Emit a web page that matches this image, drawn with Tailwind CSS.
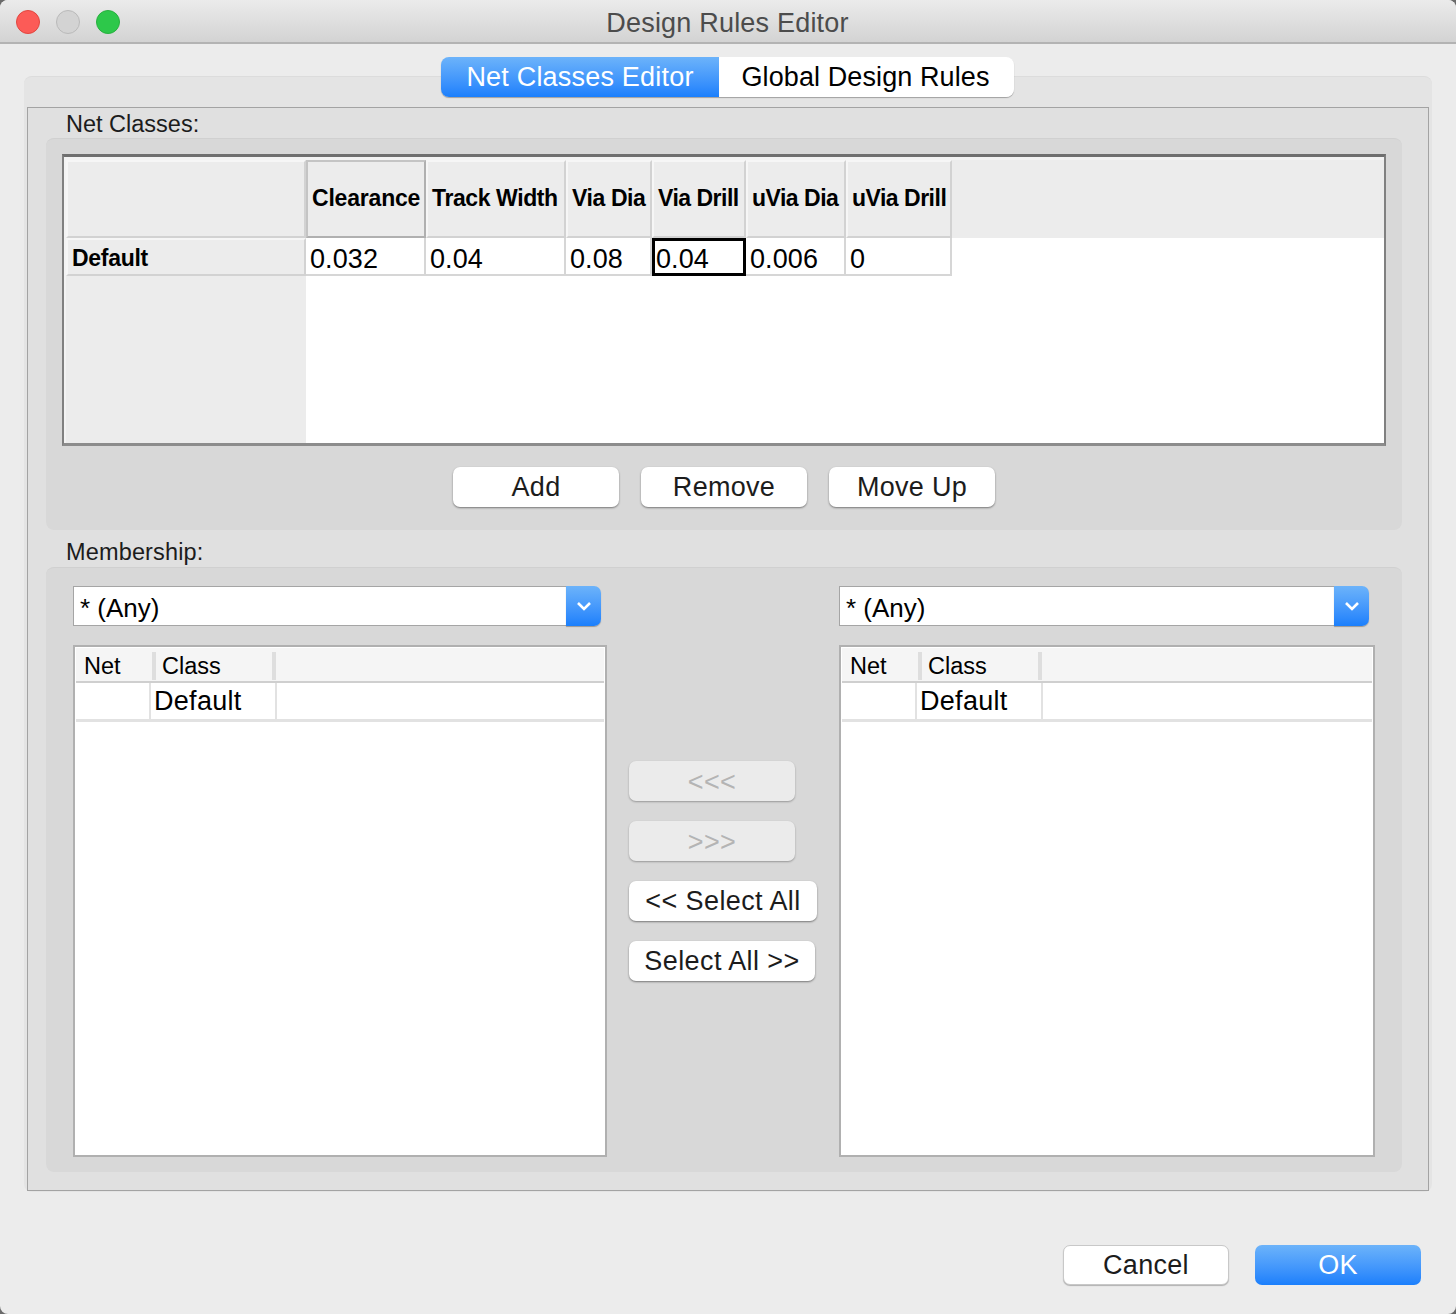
<!DOCTYPE html>
<html lang="en">
<head>
    <meta charset="UTF-8">
    <title>Design Rules Editor</title>
    <script src="https://cdn.jsdelivr.net/npm/@tailwindcss/browser@4"></script>
</head>

<body class="bg-[#6b6b6b] font-['Liberation_Sans',Arial,sans-serif] text-[#1c1c1c]">

    <div class="w-[1456px] h-[1314px] bg-[#ececec] rounded-[8px] overflow-hidden flex flex-col">

        <!-- title bar -->
        <div class="h-[44px] shrink-0 relative flex items-center justify-center bg-gradient-to-b from-[#ebebeb] to-[#d3d3d3] border-b-2 border-[#b3b3b3]">
            <div class="absolute left-[16px] top-[10px] flex gap-[16px]">
                <span class="w-[24px] h-[24px] rounded-full bg-[#fc5b57] border border-[#e2463f]"></span>
                <span class="w-[24px] h-[24px] rounded-full bg-[#d3d3d3] border border-[#bababa]"></span>
                <span class="w-[24px] h-[24px] rounded-full bg-[#2dc84a] border border-[#28b03f]"></span>
            </div>
            <span class="text-[27px] tracking-[0.2px] text-[#4c4c4c] mt-[5px] ml-[-1px]">Design Rules Editor</span>
        </div>

        <!-- tabs -->
        <div class="relative z-10 mt-[13px] ml-[441px] flex w-[573px] h-[40px] text-[27px] rounded-[8px] shadow-[0_1px_1px_rgba(0,0,0,0.3)]">
            <div class="w-[278px] flex items-center justify-center rounded-l-[8px] text-white tracking-[0.2px] bg-gradient-to-b from-[#6cb3fa] to-[#1a7ffc]">Net Classes Editor</div>
            <div class="w-[295px] flex items-center justify-center rounded-r-[8px] bg-white text-black tracking-[0.1px] pr-[2px]">Global Design Rules</div>
        </div>

        <!-- tab pane -->
        <div class="mt-[-21px] mx-[24px] w-[1408px] h-[1116px] pt-[30px] px-[3px] rounded-[8px] bg-[#e4e4e4] border-t border-[#dcdcdc]">
            <div class="h-[1084px] border border-[#a3a3a3] bg-[#e0e0e0] px-[18px] w-[1402px]">

                <div class="h-[30px] pl-[20px] pt-[2px] text-[23.5px] leading-[29px]">Net Classes:</div>

                <!-- net classes panel -->
                <div class="w-[1356px] h-[392px] bg-[#d8d8d8] rounded-[8px] border-t border-[#d0d0d0] pt-[15px] px-[16px]">
                    <div class="w-[1324px] h-[292px] border-y-[3px] border-x-2 border-t-[#6f6f6f] border-b-[#8c8c8c] border-x-[#808080] bg-[#f3f3f3] pt-[3px] pl-[2px]">
                        <div class="grid grid-cols-[240px_120px_140px_86px_94px_100px_106px_1fr] grid-rows-[78px_38px_1fr] h-full text-black bg-white">
                            <div class="bg-[#ececec] border-2 border-t-[#f6f6f6] border-l-[#f6f6f6] border-r-[#d2d2d2] border-b-[#d2d2d2]"></div>
                            <div class="bg-[#ececec] border-2 border-t-[#c4c4c4] border-l-[#c4c4c4] border-r-[#b0b0b0] border-b-[#b0b0b0] flex items-center pl-[4px] pb-[2px] font-bold text-[23px] tracking-[-0.2px]">Clearance</div>
                            <div class="bg-[#ececec] border-2 border-t-[#f6f6f6] border-l-[#f6f6f6] border-r-[#d2d2d2] border-b-[#d2d2d2] flex items-center pl-[4px] pb-[2px] font-bold text-[23px] tracking-[-0.4px]">Track Width</div>
                            <div class="bg-[#ececec] border-2 border-t-[#f6f6f6] border-l-[#f6f6f6] border-r-[#d2d2d2] border-b-[#d2d2d2] flex items-center pl-[4px] pb-[2px] font-bold text-[23px] tracking-[-0.4px]">Via Dia</div>
                            <div class="bg-[#ececec] border-2 border-t-[#f6f6f6] border-l-[#f6f6f6] border-r-[#d2d2d2] border-b-[#d2d2d2] flex items-center pl-[4px] pb-[2px] font-bold text-[23px] tracking-[-0.5px]">Via Drill</div>
                            <div class="bg-[#ececec] border-2 border-t-[#f6f6f6] border-l-[#f6f6f6] border-r-[#d2d2d2] border-b-[#d2d2d2] flex items-center pl-[4px] pb-[2px] font-bold text-[23px] tracking-[-0.5px]">uVia Dia</div>
                            <div class="bg-[#ececec] border-2 border-t-[#f6f6f6] border-l-[#f6f6f6] border-r-[#d2d2d2] border-b-[#d2d2d2] flex items-center pl-[4px] pb-[2px] font-bold text-[23px] tracking-[-0.5px]">uVia Drill</div>
                            <div class="bg-[#ececec]"></div>

                            <div class="bg-[#ececec] border-2 border-t-[#f6f6f6] border-l-[#f6f6f6] border-r-[#d2d2d2] border-b-[#d2d2d2] flex items-center pl-[4px] font-bold text-[23px] tracking-[-0.3px] pt-[2px]">Default</div>
                            <div class="border-r-2 border-b-2 border-[#d6d6d6] flex items-center pl-[4px] pt-[6px] text-[27px] tracking-[0.1px]">0.032</div>
                            <div class="border-r-2 border-b-2 border-[#d6d6d6] flex items-center pl-[4px] pt-[6px] text-[27px] tracking-[0.1px]">0.04</div>
                            <div class="border-r-2 border-b-2 border-[#d6d6d6] flex items-center pl-[4px] pt-[6px] text-[27px] tracking-[0.1px]">0.08</div>
                            <div class="border-[3px] border-black flex items-center pl-[1px] pt-[4px] text-[27px] tracking-[0.1px]">0.04</div>
                            <div class="border-r-2 border-b-2 border-[#d6d6d6] flex items-center pl-[4px] pt-[6px] text-[27px] tracking-[0.1px]">0.006</div>
                            <div class="border-r-2 border-b-2 border-[#d6d6d6] flex items-center pl-[4px] pt-[6px] text-[27px]">0</div>
                            <div></div>

                            <div class="bg-[#ececec]"></div>
                        </div>
                    </div>

                    <div class="mt-[21px] flex justify-center gap-[22px] text-[27px] tracking-[0.3px]">
                        <div class="w-[166px] h-[40px] flex items-center justify-center rounded-[7px] bg-white shadow-[0_1px_2px_rgba(0,0,0,0.45)]">Add</div>
                        <div class="w-[166px] h-[40px] flex items-center justify-center rounded-[7px] bg-white shadow-[0_1px_2px_rgba(0,0,0,0.45)]">Remove</div>
                        <div class="w-[166px] h-[40px] flex items-center justify-center rounded-[7px] bg-white shadow-[0_1px_2px_rgba(0,0,0,0.45)]">Move Up</div>
                    </div>
                </div>

                <div class="h-[37px] pl-[20px] pt-[8px] text-[23.5px] tracking-[0.15px] leading-[29px]">Membership:</div>

                <!-- membership panel -->
                <div class="w-[1356px] h-[605px] bg-[#d8d8d8] rounded-[8px] border-t border-[#d0d0d0] pt-[18px] pl-[27px] flex gap-[22px]">

                    <!-- left list -->
                    <div class="w-[534px]">
                        <div class="w-[528px] h-[40px] flex text-[26px] text-black">
                            <div class="flex-1 bg-white border border-[#a5a5a5] border-r-0 pl-[6px] leading-[43px]">* (Any)</div>
                            <div class="w-[35px] flex items-center justify-center rounded-r-[7px] bg-gradient-to-b from-[#6cb3fa] to-[#1a7ffc] shadow-[0_1px_1px_rgba(0,0,0,0.3)]">
                                <svg width="16" height="10" viewBox="0 0 16 10" fill="none" stroke="white" stroke-width="2.6"><path d="M2 2l6 6 6-6"/></svg>
                            </div>
                        </div>
                        <div class="mt-[19px] h-[512px] border-2 border-[#b0b0b0] bg-white p-px text-black">
                            <div class="h-[35px] bg-[#f5f5f5] border-b-2 border-[#cfcfcf] flex items-end pb-[1px] text-[23.5px] leading-[28px]">
                                <div class="w-[76px] pl-[8px]">Net</div>
                                <div class="w-[124px] h-[28px] border-l-[4px] border-r-[4px] border-[#dedede] pl-[6px]">Class</div>
                            </div>
                            <div class="h-[39px] flex border-b-[3px] border-[#e2e2e2] text-[27px] tracking-[0.3px] leading-[37px]">
                                <div class="w-[75px] border-r-2 border-[#e2e2e2]"></div>
                                <div class="w-[126px] border-r-2 border-[#e2e2e2] pl-[3px]">Default</div>
                            </div>
                        </div>
                    </div>

                    <!-- move buttons -->
                    <div class="w-[188px] pt-[175px] flex flex-col gap-[20px] text-[27px] tracking-[0.4px]">
                        <div class="w-[166px] h-[40px] flex items-center justify-center rounded-[7px] pt-[3px] bg-[#ebebeb] text-[#b4b4b4] shadow-[0_1px_2px_rgba(0,0,0,0.3)]">&lt;&lt;&lt;</div>
                        <div class="w-[166px] h-[40px] flex items-center justify-center rounded-[7px] pt-[3px] bg-[#ebebeb] text-[#b4b4b4] shadow-[0_1px_2px_rgba(0,0,0,0.3)]">&gt;&gt;&gt;</div>
                        <div class="w-[188px] h-[40px] flex items-center justify-center rounded-[7px] bg-white shadow-[0_1px_2px_rgba(0,0,0,0.45)]">&lt;&lt; Select All</div>
                        <div class="w-[186px] h-[40px] flex items-center justify-center rounded-[7px] bg-white shadow-[0_1px_2px_rgba(0,0,0,0.45)]">Select All &gt;&gt;</div>
                    </div>

                    <!-- right list -->
                    <div class="w-[536px]">
                        <div class="w-[530px] h-[40px] flex text-[26px] text-black">
                            <div class="flex-1 bg-white border border-[#a5a5a5] border-r-0 pl-[6px] leading-[43px]">* (Any)</div>
                            <div class="w-[35px] flex items-center justify-center rounded-r-[7px] bg-gradient-to-b from-[#6cb3fa] to-[#1a7ffc] shadow-[0_1px_1px_rgba(0,0,0,0.3)]">
                                <svg width="16" height="10" viewBox="0 0 16 10" fill="none" stroke="white" stroke-width="2.6"><path d="M2 2l6 6 6-6"/></svg>
                            </div>
                        </div>
                        <div class="mt-[19px] h-[512px] border-2 border-[#b0b0b0] bg-white p-px text-black">
                            <div class="h-[35px] bg-[#f5f5f5] border-b-2 border-[#cfcfcf] flex items-end pb-[1px] text-[23.5px] leading-[28px]">
                                <div class="w-[76px] pl-[8px]">Net</div>
                                <div class="w-[124px] h-[28px] border-l-[4px] border-r-[4px] border-[#dedede] pl-[6px]">Class</div>
                            </div>
                            <div class="h-[39px] flex border-b-[3px] border-[#e2e2e2] text-[27px] tracking-[0.3px] leading-[37px]">
                                <div class="w-[75px] border-r-2 border-[#e2e2e2]"></div>
                                <div class="w-[126px] border-r-2 border-[#e2e2e2] pl-[3px]">Default</div>
                            </div>
                        </div>
                    </div>
                </div>
            </div>
        </div>

        <!-- dialog buttons -->
        <div class="mt-[53px] pl-[1063px] flex gap-[26px] text-[27px] tracking-[0.3px]">
            <div class="w-[166px] h-[40px] flex items-center justify-center rounded-[7px] bg-white border border-[#c8c8c8] shadow-[0_1px_1px_rgba(0,0,0,0.25)]">Cancel</div>
            <div class="w-[166px] h-[40px] flex items-center justify-center rounded-[7px] text-white bg-gradient-to-b from-[#6cb3fa] to-[#1a7ffc]">OK</div>
        </div>
    </div>

</body>
</html>
